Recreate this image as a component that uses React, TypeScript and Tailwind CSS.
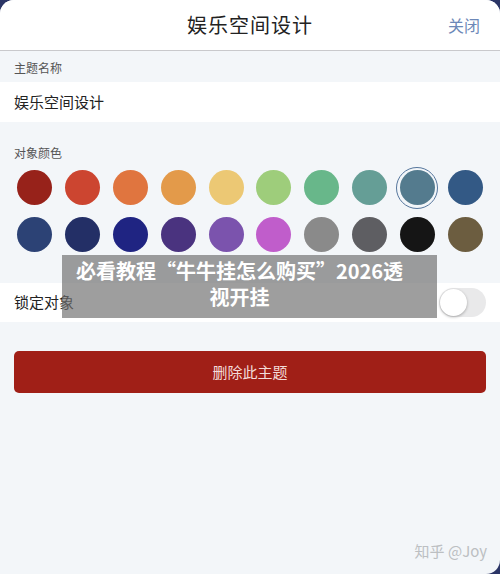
const colors = [
  '#97221a', '#cc4530', '#e0753f', '#e39a4a', '#ecc874',
  '#9ecd7b', '#68b78a', '#659e96', '#547b8e', '#335985',
  '#2c4275', '#232f66', '#1f2482', '#4a337f', '#7b53ad',
  '#c05dcb', '#8a8a8a', '#5e5e62', '#151515', '#6c5d40',
];

const App = () => {
  return (
    <div
      className="relative w-[500px] h-[574px] overflow-hidden bg-[#2b3566]"
      style={{ fontFamily: '"Noto Sans CJK SC", "Noto Sans", sans-serif' }}
    >
      <div className="flex flex-col h-full bg-[#f3f6f9] rounded-t-[14px] rounded-br-[14px] overflow-hidden">
        {/* Header */}
        <div className="relative flex items-center justify-center h-[51px] bg-white border-b border-[#c9c9cc] shrink-0">
          <span className="text-[20px] text-[#222] tracking-[1px]">娱乐空间设计</span>
          <span className="absolute right-[20px] top-[13px] text-[16px] text-[#6d88b8]">关闭</span>
        </div>

        {/* Theme name */}
        <div className="px-[14px] pt-[8px] pb-[5px] text-[12px] text-[#555]">主题名称</div>
        <div className="flex items-center h-[40px] px-[14px] bg-white text-[15px] text-[#222]">
          娱乐空间设计
        </div>

        {/* Colours */}
        <div className="px-[14px] pt-[22px] text-[12px] text-[#555]">对象颜色</div>
        <div className="grid grid-cols-10 gap-y-[12px] px-[11px] pt-[8px]">
          {colors.map((c, i) => (
            <div key={i} className="flex items-center justify-center h-[35px]">
              {i === 8 ? (
                <div className="flex items-center justify-center w-[42px] h-[42px] rounded-full border-[1.5px] border-[#56769d]">
                  <div className="w-[35px] h-[35px] rounded-full" style={{ backgroundColor: c }} />
                </div>
              ) : (
                <div className="w-[35px] h-[35px] rounded-full" style={{ backgroundColor: c }} />
              )}
            </div>
          ))}
        </div>

        {/* Lock */}
        <div className="flex items-center justify-between h-[39px] mt-[31px] pl-[14px] pr-[14px] bg-white">
          <span className="text-[15px] text-[#222]">锁定对象</span>
          <div className="relative w-[47px] h-[29px] rounded-full bg-[#e9e9ea]">
            <div className="absolute left-[1px] top-[1px] w-[27px] h-[27px] rounded-full bg-white shadow-[0_1px_3px_rgba(0,0,0,0.3)]" />
          </div>
        </div>

        {/* Delete */}
        <div className="px-[14px] pt-[29px]">
          <div className="flex items-center justify-center h-[42px] rounded-[5px] bg-[#a01f17] text-[15px] text-[#f3dcd9]">
            删除此主题
          </div>
        </div>

        <div className="flex-1" />
        <div className="flex justify-end pr-[13px] pb-[12px] text-[15px] text-[#bcbfc2]">知乎 @Joy</div>
      </div>

      {/* Overlay banner */}
      <div className="absolute left-[62px] top-[255px] w-[375px] h-[63px] bg-[rgba(112,112,112,0.68)] pl-[5px] pt-[3px]">
        <div className="w-[345px] text-center text-[20px] font-bold leading-[26px] text-white">
          必看教程“牛牛挂怎么购买”2026透视开挂
        </div>
      </div>
    </div>
  );
};

export default App;
